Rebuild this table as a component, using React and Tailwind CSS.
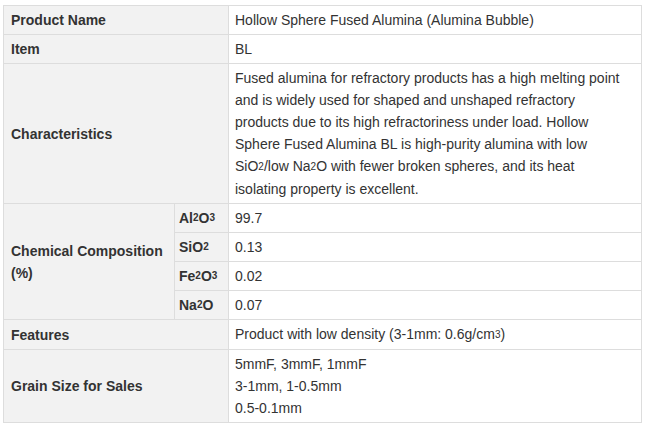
import React from 'react';

const Sub = ({ children }) => (
    <span className="text-[10px] align-[1px]">{children}</span>
);

const Head = ({ children, className = '' }) => (
    <div className={`bg-[#f2f2f2] font-bold flex items-center px-[7px] ${className}`}>
        {children}
    </div>
);

const Cell = ({ children, className = '' }) => (
    <div className={`bg-white pl-[6px] pr-[7px] py-[3px] ${className}`}>{children}</div>
);

const Formula = ({ children }) => (
    <div className="bg-[#f2f2f2] font-bold flex items-center px-[4px] py-[3px]">{children}</div>
);

export default function App() {
    return (
        <div className="bg-white min-h-screen pt-[5px] pl-[3px] text-[14px] leading-[22px] text-[#333]" style={{ fontFamily: '"Liberation Sans", Arial, sans-serif' }}>
            <div className="w-[639px] grid grid-cols-[170px_53px_412px] gap-px p-px bg-[#dddddd]">
                <Head className="col-span-2">Product Name</Head>
                <Cell>Hollow Sphere Fused Alumina (Alumina Bubble)</Cell>

                <Head className="col-span-2">Item</Head>
                <Cell>BL</Cell>

                <Head className="col-span-2">Characteristics</Head>
                <Cell>
                    Fused alumina for refractory products has a high melting point<br />
                    and is widely used for shaped and unshaped refractory<br />
                    products due to its high refractoriness under load. Hollow<br />
                    Sphere Fused Alumina BL is high-purity alumina with low<br />
                    SiO<Sub>2</Sub>/low Na<Sub>2</Sub>O with fewer broken spheres, and its heat<br />
                    isolating property is excellent.
                </Cell>

                <Head className="row-span-4">
                    <span>Chemical Composition<br />(%)</span>
                </Head>
                <Formula>Al<Sub>2</Sub>O<Sub>3</Sub></Formula>
                <Cell>99.7</Cell>
                <Formula>SiO<Sub>2</Sub></Formula>
                <Cell>0.13</Cell>
                <Formula>Fe<Sub>2</Sub>O<Sub>3</Sub></Formula>
                <Cell>0.02</Cell>
                <Formula>Na<Sub>2</Sub>O</Formula>
                <Cell>0.07</Cell>

                <Head className="col-span-2">Features</Head>
                <Cell>Product with low density (3-1mm: 0.6g/cm<Sub>3</Sub>)</Cell>

                <Head className="col-span-2">Grain Size for Sales</Head>
                <Cell>
                    5mmF, 3mmF, 1mmF<br />
                    3-1mm, 1-0.5mm<br />
                    0.5-0.1mm
                </Cell>
            </div>
        </div>
    );
}
